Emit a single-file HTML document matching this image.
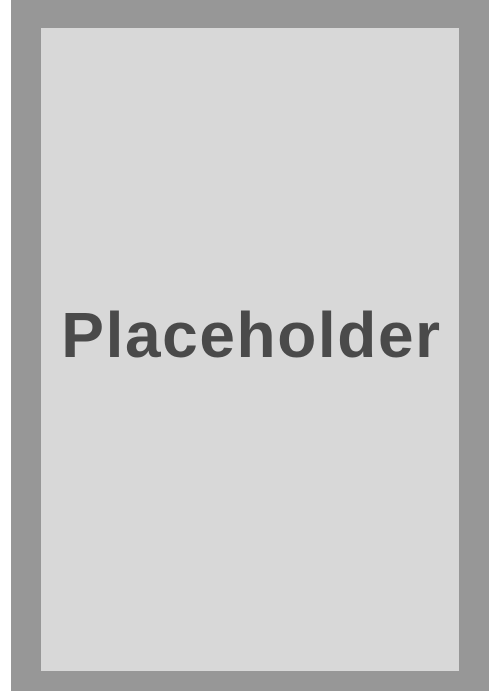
<!DOCTYPE html>
<html><head><style>
html,body{margin:0;padding:0;width:499px;height:691px;background:#fff;overflow:hidden}
.outer{position:absolute;left:11px;top:0;width:478px;height:691px;background:#979797}
.inner{position:absolute;left:41px;top:28px;width:418px;height:643px;background:#d8d8d8}
.t{position:absolute;left:2px;width:499px;top:297px;text-align:center;font:bold 64px/76px "Liberation Sans",sans-serif;color:#4a4a4a;letter-spacing:1.6px}
</style></head><body>
<div class="outer"></div><div class="inner"></div>
<div class="t">Placeholder</div>
</body></html>
